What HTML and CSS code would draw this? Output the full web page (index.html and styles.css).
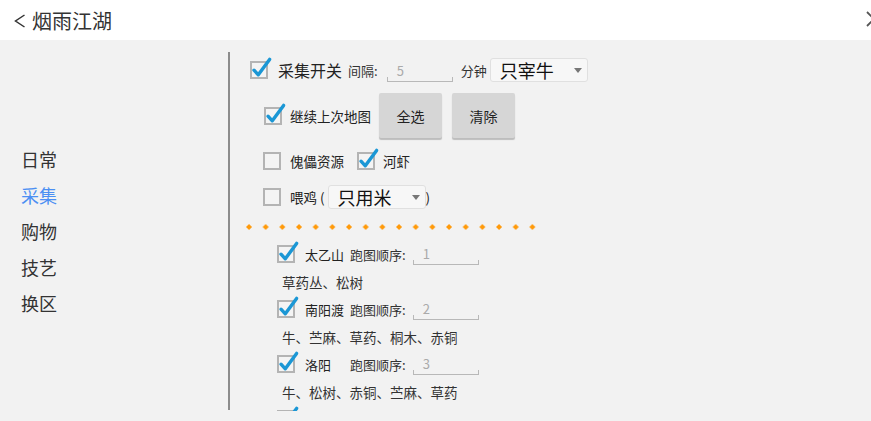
FILE: index.html
```html
<!DOCTYPE html>
<html lang="zh-CN">
<head>
  <meta charset="UTF-8">
  <title>烟雨江湖</title>
  <link rel="stylesheet" href="styles.css">
</head>
<body>
  <svg class="sprite" width="0" height="0">
    <symbol id="box-on" viewBox="0 0 18 18" overflow="visible">
      <rect x="1" y="1" width="16" height="16" fill="#f4f4f4" stroke="#b4b4b4" stroke-width="2"/>
      <path d="M4 9.2 L8.3 13.8 L19.6 -1.6" fill="none" stroke="#1b97d5" stroke-width="3.4" stroke-linecap="round" stroke-linejoin="round"/>
    </symbol>
    <symbol id="box-off" viewBox="0 0 18 18">
      <rect x="1" y="1" width="16" height="16" fill="#f4f4f4" stroke="#b4b4b4" stroke-width="2"/>
    </symbol>
  </svg>

  <header class="topbar">
    <div class="title">
      <svg class="back" width="12" height="14" viewBox="0 0 12 14">
        <polyline points="10.5,1 1.5,7 10.5,13" fill="none" stroke="#333" stroke-width="1.5"/>
      </svg>
      <span>烟雨江湖</span>
    </div>
    <svg class="close" width="16" height="16" viewBox="0 0 16 16">
      <path d="M1 1 L15 15 M15 1 L1 15" stroke="#555" stroke-width="1.8"/>
    </svg>
  </header>

  <div class="main">
    <nav class="sidebar">
      <div class="nav-item">日常</div>
      <div class="nav-item active">采集</div>
      <div class="nav-item">购物</div>
      <div class="nav-item">技艺</div>
      <div class="nav-item">换区</div>
    </nav>

    <section class="panel">
      <div class="row row-switch">
        <svg class="chk"><use href="#box-on"/></svg>
        <span class="big">采集开关</span>
        <span class="small gap-6">间隔:</span>
        <span class="field field-wide">5</span>
        <span class="small gap-8">分钟</span>
        <div class="dropdown gap-3">只宰牛<i class="caret"></i></div>
      </div>

      <div class="row row-map">
        <svg class="chk"><use href="#box-on"/></svg>
        <span class="label">继续上次地图</span>
        <button class="btn">全选</button>
        <button class="btn">清除</button>
      </div>

      <div class="row row-opts">
        <svg class="chk"><use href="#box-off"/></svg>
        <span class="label">傀儡资源</span>
        <svg class="chk gap-13"><use href="#box-on"/></svg>
        <span class="label">河虾</span>
      </div>

      <div class="row row-feed">
        <svg class="chk"><use href="#box-off"/></svg>
        <span class="label">喂鸡 (</span>
        <div class="dropdown dropdown-feed">只用米<i class="caret"></i></div>
        <span class="label paren">)</span>
      </div>

      <svg class="dots" width="292" height="8">
        <defs>
          <pattern id="dot" width="16.67" height="8" patternUnits="userSpaceOnUse">
            <polygon points="4,1 7,4 4,7 1,4" fill="#ff9a0a"/>
          </pattern>
        </defs>
        <rect width="292" height="8" fill="url(#dot)"/>
      </svg>

      <div class="maps">
        <div class="map">
          <div class="map-head">
            <svg class="chk"><use href="#box-on"/></svg>
            <span class="map-name">太乙山</span>
            <span class="small">跑图顺序:</span>
            <span class="field">1</span>
          </div>
          <div class="map-desc">草药丛、松树</div>
        </div>
        <div class="map">
          <div class="map-head">
            <svg class="chk"><use href="#box-on"/></svg>
            <span class="map-name">南阳渡</span>
            <span class="small">跑图顺序:</span>
            <span class="field">2</span>
          </div>
          <div class="map-desc">牛、苎麻、草药、桐木、赤铜</div>
        </div>
        <div class="map">
          <div class="map-head">
            <svg class="chk"><use href="#box-on"/></svg>
            <span class="map-name">洛阳</span>
            <span class="small">跑图顺序:</span>
            <span class="field">3</span>
          </div>
          <div class="map-desc">牛、松树、赤铜、苎麻、草药</div>
        </div>
        <div class="map">
          <div class="map-head">
            <svg class="chk"><use href="#box-on"/></svg>
          </div>
        </div>
      </div>
    </section>
  </div>
</body>
</html>
```

FILE: styles.css
```css
html, body {
  margin: 0;
  height: 100%;
  overflow: hidden;
}

body {
  font-family: "Noto Sans CJK SC", "Noto Sans", sans-serif;
  background: #f2f2f2;
  color: #222;
}

.sprite {
  position: absolute;
  width: 0;
  height: 0;
}

.topbar {
  height: 40px;
  background: #fff;
  display: flex;
  align-items: center;
  justify-content: space-between;
}

.title {
  display: flex;
  align-items: center;
  padding-left: 14px;
  font-size: 20px;
  color: #333;
}

.title .back {
  margin-right: 6px;
  margin-top: 1px;
}

.close {
  margin-right: -11px;
  margin-top: -3px;
}

.main {
  display: flex;
  height: 381px;
  overflow: hidden;
}

.sidebar {
  width: 228px;
  margin: 12px 0 11px;
  border-right: 2px solid #8c8c8c;
  display: flex;
  flex-direction: column;
  justify-content: center;
  flex-shrink: 0;
}

.nav-item {
  padding-left: 21px;
  font-size: 18px;
  line-height: 36px;
  color: #333;
}

.nav-item.active {
  color: #4b8ff3;
}

.panel {
  flex: 1;
  padding-top: 18px;
  margin-bottom: 10px;
  overflow: hidden;
}

.row {
  display: flex;
  align-items: center;
}

.chk {
  width: 18px;
  height: 18px;
  overflow: visible;
  flex-shrink: 0;
}

.big {
  font-size: 16px;
  margin-left: 10px;
}

.small {
  font-size: 13px;
  color: #333;
}

.label {
  font-size: 13.5px;
  margin-left: 9px;
}

.gap-3 { margin-left: 3px; }
.gap-6 { margin-left: 6px; }
.gap-8 { margin-left: 8px; }
.gap-13 { margin-left: 13px; }

.field {
  width: 56px;
  height: 20px;
  padding-left: 10px;
  margin-left: 7px;
  font-size: 13px;
  line-height: 20px;
  color: #aaa;
  border-bottom: 1px solid #b8b8b8;
  background:
    linear-gradient(#b8b8b8, #b8b8b8) left bottom / 1px 4px no-repeat,
    linear-gradient(#b8b8b8, #b8b8b8) right bottom / 1px 4px no-repeat;
}

.field-wide {
  height: 23px;
  line-height: 25px;
  margin-left: 9px;
}

.dropdown {
  box-sizing: border-box;
  width: 98px;
  height: 24px;
  padding: 0 5px 0 9px;
  border: 1px solid #e0e0e0;
  border-radius: 3px;
  background: #f7f7f7;
  font-size: 18px;
  line-height: 22px;
  color: #111;
  display: flex;
  align-items: center;
  justify-content: space-between;
}

.caret {
  width: 0;
  height: 0;
  border-left: 4px solid transparent;
  border-right: 4px solid transparent;
  border-top: 5px solid #777;
}

.row-switch {
  height: 24px;
  padding-left: 20px;
}

.row-map {
  height: 45px;
  margin-top: 11px;
  padding-left: 34px;
}

.row-map .label {
  margin-left: 8px;
}

.btn {
  width: 63px;
  height: 45px;
  margin-left: 8px;
  border: none;
  border-radius: 2px;
  background: #d6d6d6;
  box-shadow: 0 2px 1px rgba(0, 0, 0, 0.22);
  font-family: inherit;
  font-size: 14px;
  color: #222;
  padding: 0;
}

.btn + .btn {
  margin-left: 10px;
}

.row-opts {
  height: 28px;
  margin-top: 9px;
  padding-left: 33px;
}

.row-opts .gap-13 + .label {
  margin-left: 8px;
}

.row-feed {
  height: 24px;
  margin-top: 10px;
  padding-left: 33px;
}

.dropdown-feed {
  margin-left: 3px;
}

.row-feed .paren {
  margin-left: 0;
}

.dots {
  display: block;
  margin: 14px 0 0 15px;
}

.maps {
  margin-top: 13px;
  padding-left: 47px;
}

.map {
  padding-bottom: 8px;
}

.map-head {
  display: flex;
  align-items: center;
  height: 20px;
}

.map-name {
  width: 45px;
  margin-left: 10px;
  font-size: 13px;
}

.map-desc {
  margin-top: 9px;
  padding-left: 5px;
  font-size: 13.5px;
  line-height: 18px;
  color: #333;
}
```
